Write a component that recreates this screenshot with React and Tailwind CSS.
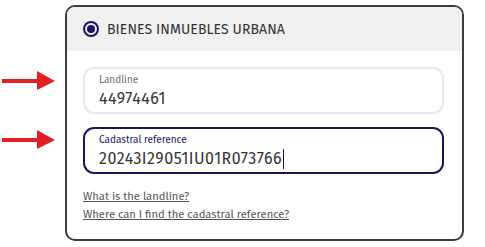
import React from 'react';

const Arrow = ({ top }) => (
  <svg
    className="absolute left-[-83px]"
    style={{ top }}
    width="56"
    height="20"
    viewBox="0 0 56 20"
  >
    <rect x="2" y="8" width="36" height="4" fill="#e31e24" />
    <polygon points="37,0 55,10 37,19" fill="#e31e24" />
  </svg>
);

const Field = ({ label, value, active, arrowTop }) => (
  <div className="relative">
    <Arrow top={arrowTop} />
    <div
      className={`h-[47px] rounded-[11px] border-2 px-[14px] pt-[5px] ${
        active ? 'border-[#1b1462]' : 'border-[#e8e8e8]'
      }`}
    >
      <div className={`text-[10px] leading-[13px] ${active ? 'text-[#1b1462]' : 'text-[#6e6e6e]'}`}>{label}</div>
      <div className="mt-[2px] flex items-center text-[16px] leading-[20px] tracking-[0.5px] text-[#333]">
        {value}
        {active && <span className="ml-[1px] inline-block h-[20px] w-[1px] bg-[#1b1462]" />}
      </div>
    </div>
  </div>
);

export default function App() {
  return (
    <div className="w-[485px] h-[247px] bg-white pt-[5px]" style={{ fontFamily: '"Fira Sans", "Noto Sans", sans-serif' }}>
      <div className="ml-[65px] w-[399px] h-[236px] rounded-[10px] border-2 border-[#3c3c3c]">
        <div className="flex h-[44px] items-center gap-[8px] rounded-t-[8px] bg-[#f0f0f0] pl-[16px]">
          <span className="flex h-[16px] w-[16px] items-center justify-center rounded-full border-2 border-[#1b1462]">
            <span className="h-[8px] w-[8px] rounded-full bg-[#1b1462]" />
          </span>
          <span className="text-[14px] tracking-[0.1px] text-[#333]">BIENES INMUEBLES URBANA</span>
        </div>
        <div className="pl-[16px] pr-[18px] pt-[16px]">
          <div className="flex flex-col gap-[13px]">
            <Field label="Landline" value="44974461" arrowTop="4px" />
            <Field label="Cadastral reference" value="20243I29051IU01R073766" active arrowTop="3px" />
          </div>
          <div className="mt-[14px] flex flex-col items-start text-[11.2px] leading-[18px] text-[#555]">
            <a href="#" className="underline">What is the landline?</a>
            <a href="#" className="underline">Where can I find the cadastral reference?</a>
          </div>
        </div>
      </div>
    </div>
  );
}
